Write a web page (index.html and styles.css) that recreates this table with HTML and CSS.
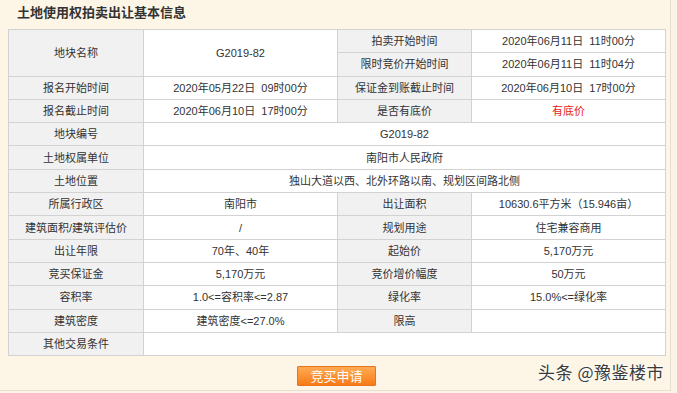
FILE: index.html
```html
<!DOCTYPE html>
<html lang="zh-CN">
<head>
<meta charset="utf-8">
<title>土地使用权拍卖出让基本信息</title>
<link rel="stylesheet" href="styles.css">
</head>
<body>
<div class="page">
  <h2 class="title">土地使用权拍卖出让基本信息</h2>
  <table class="info">
    <colgroup>
      <col class="c1"><col class="c2"><col class="c3"><col class="c4">
    </colgroup>
    <tr>
      <th rowspan="2">地块名称</th>
      <td rowspan="2">G2019-82</td>
      <th>拍卖开始时间</th>
      <td>2020年06月11日&nbsp;&nbsp;11时00分</td>
    </tr>
    <tr>
      <th>限时竞价开始时间</th>
      <td>2020年06月11日&nbsp;&nbsp;11时04分</td>
    </tr>
    <tr>
      <th>报名开始时间</th>
      <td>2020年05月22日&nbsp;&nbsp;09时00分</td>
      <th>保证金到账截止时间</th>
      <td>2020年06月10日&nbsp;&nbsp;17时00分</td>
    </tr>
    <tr>
      <th>报名截止时间</th>
      <td>2020年06月10日&nbsp;&nbsp;17时00分</td>
      <th>是否有底价</th>
      <td class="red">有底价</td>
    </tr>
    <tr>
      <th>地块编号</th>
      <td colspan="3">G2019-82</td>
    </tr>
    <tr>
      <th>土地权属单位</th>
      <td colspan="3">南阳市人民政府</td>
    </tr>
    <tr>
      <th>土地位置</th>
      <td colspan="3">独山大道以西、北外环路以南、规划区间路北侧</td>
    </tr>
    <tr>
      <th>所属行政区</th>
      <td>南阳市</td>
      <th>出让面积</th>
      <td>10630.6平方米（15.946亩）</td>
    </tr>
    <tr>
      <th>建筑面积/建筑评估价</th>
      <td>/</td>
      <th>规划用途</th>
      <td>住宅兼容商用</td>
    </tr>
    <tr>
      <th>出让年限</th>
      <td>70年、40年</td>
      <th>起始价</th>
      <td>5,170万元</td>
    </tr>
    <tr>
      <th>竞买保证金</th>
      <td>5,170万元</td>
      <th>竞价增价幅度</th>
      <td>50万元</td>
    </tr>
    <tr>
      <th>容积率</th>
      <td>1.0&lt;=容积率&lt;=2.87</td>
      <th>绿化率</th>
      <td>15.0%&lt;=绿化率</td>
    </tr>
    <tr>
      <th>建筑密度</th>
      <td>建筑密度&lt;=27.0%</td>
      <th>限高</th>
      <td></td>
    </tr>
    <tr>
      <th>其他交易条件</th>
      <td colspan="3"></td>
    </tr>
  </table>
  <div class="actions">
    <button class="apply" type="button">竞买申请</button>
  </div>
  <div class="watermark">头条 @豫鉴楼市</div>
</div>
</body>
</html>
```

FILE: styles.css
```css
html, body {
  margin: 0;
  padding: 0;
  background: #fbf4e6;
}
body {
  font-family: "Liberation Sans", "Noto Sans CJK SC", sans-serif;
  color: #333;
}
.page {
  position: relative;
  width: 670px;
  height: 390px;
  background: #fdf6e7;
  border-right: 1px solid #e6dece;
  border-bottom: 1px solid #e6dece;
  box-sizing: content-box;
}
.title {
  margin: 0;
  padding-left: 17px;
  height: 25px;
  line-height: 24px;
  font-size: 13px;
  font-weight: bold;
  color: #333;
  font-family: "Noto Sans CJK SC", sans-serif;
}
.info {
  margin: 4px 0 0 8px;
  width: 657px;
  table-layout: fixed;
  border-collapse: collapse;
  border: 1px solid #cfcfcf;
  font-size: 11px;
}
.c1 { width: 135px; }
.c2 { width: 194px; }
.c3 { width: 134px; }
.c4 { width: 194px; }
.info th,
.info td {
  height: 22.3px;
  padding: 0;
  border: 1px solid #d2d2d2;
  text-align: center;
  vertical-align: middle;
  font-weight: normal;
  line-height: 14px;
  color: #333;
}
.info th {
  background: #f1f1f1;
}
.info td {
  background: #fff;
}
.info td.red {
  color: #e8211a;
}
.actions {
  display: flex;
  justify-content: center;
  width: 657px;
  margin: 10px 0 0 8px;
}
.apply {
  width: 79px;
  height: 20px;
  padding: 0;
  border: 1px solid #e8741e;
  border-radius: 1px;
  background: linear-gradient(#ffab55, #f77b16);
  color: #fff;
  font-family: "Noto Sans CJK SC", sans-serif;
  font-size: 13px;
  line-height: 18px;
}
.watermark {
  position: absolute;
  right: 6px;
  bottom: 6px;
  font-family: "Noto Sans CJK SC", sans-serif;
  font-size: 17px;
  color: #3a3a3a;
  text-shadow: 0 0 2px #fff, 0 0 2px #fff;
  letter-spacing: 0.5px;
}
```
